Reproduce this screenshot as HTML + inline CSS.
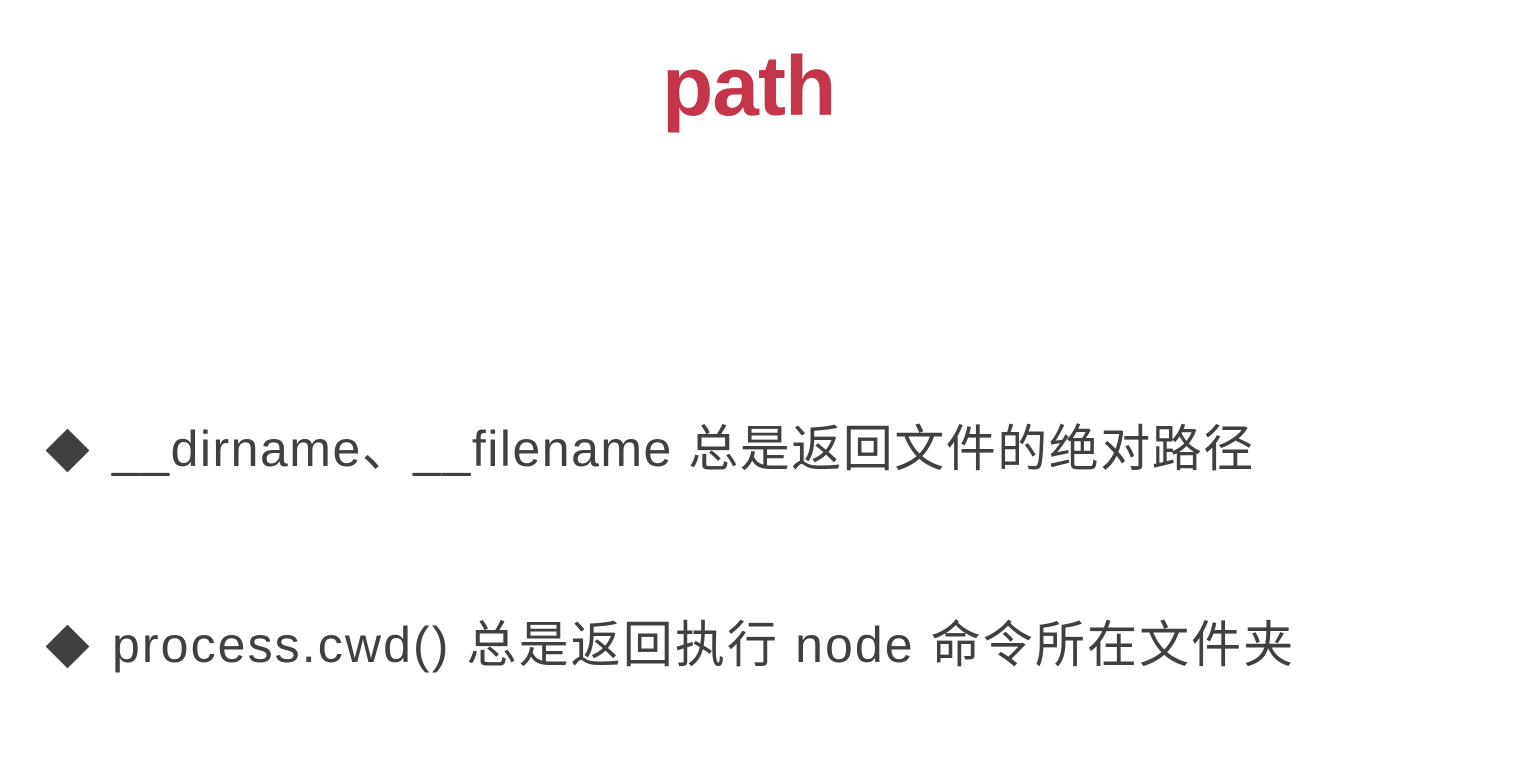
<!DOCTYPE html>
<html><head><meta charset="utf-8"><style>
html,body{margin:0;padding:0;background:#fff;width:1520px;height:772px;overflow:hidden;position:relative}
.t{position:absolute;left:662px;top:44px;font:bold 84px "Liberation Sans",sans-serif;color:#c4354b;line-height:1;letter-spacing:-1px}
.l{position:absolute;left:112px;font:50px "Liberation Sans","Noto Sans CJK SC",sans-serif;color:#404040;line-height:1;white-space:nowrap;letter-spacing:1.5px}
.d{position:absolute;left:52px;width:31px;height:31px;background:#404040;transform:rotate(45deg)}
</style></head><body>
<div class="t">path</div>
<div class="d" style="top:435px"></div>
<div class="l" style="top:424px">__dirname、__filename 总是返回文件的绝对路径</div>
<div class="d" style="top:631px"></div>
<div class="l" style="top:620px;letter-spacing:2.1px">process.cwd() 总是返回执行 node 命令所在文件夹</div>
</body></html>
